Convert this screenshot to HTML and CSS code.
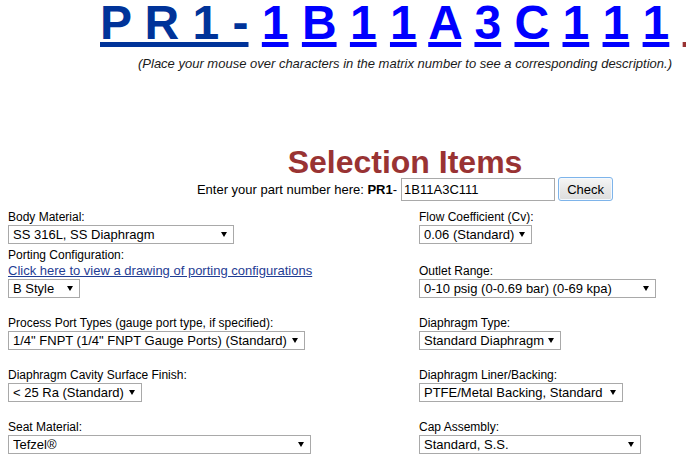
FILE: index.html
```html
<!DOCTYPE html>
<html lang="en">
<head>
    <meta charset="UTF-8">
    <title>PR1 Matrix Number</title>
    <link rel="stylesheet" href="styles.css">
</head>
<body>
<div class="page">

    <h1 class="matrix">
        <a class="base" href="#">P R 1 -</a>
        <a class="ch" href="#">1</a>
        <a class="ch" href="#">B</a>
        <a class="ch" href="#">1</a>
        <a class="ch" href="#">1</a>
        <a class="ch" href="#">A</a>
        <a class="ch" href="#">3</a>
        <a class="ch" href="#">C</a>
        <a class="ch" href="#">1</a>
        <a class="ch" href="#">1</a>
        <a class="ch" href="#">1</a>
        <a class="ch ch-more" href="#">&nbsp;</a>
    </h1>
    <p class="hint">(Place your mouse over characters in the matrix number to see a corresponding description.)</p>

    <h2 class="title">Selection Items</h2>
    <div class="entry">
        <span class="entry-label">Enter your part number here: <b>PR1</b>-</span>
        <input type="text" class="part" value="1B11A3C111">
        <button class="check">Check</button>
    </div>

    <div class="items">
        <!-- left column, first block -->
        <div class="item">
            <label>Body Material:</label>
            <span class="sel w-body"><select><option>SS 316L, SS Diaphragm</option></select></span>
            <label class="next">Porting Configuration:</label>
            <a class="drawing" href="#">Click here to view a drawing of porting configurations</a>
            <span class="sel w-style"><select><option>B Style</option></select></span>
        </div>
        <!-- right column, first block -->
        <div class="item">
            <label>Flow Coefficient (Cv):</label>
            <span class="sel w-flow"><select><option>0.06 (Standard)</option></select></span>
            <label class="spaced">Outlet Range:</label>
            <span class="sel w-outlet"><select><option>0-10 psig (0-0.69 bar) (0-69 kpa)</option></select></span>
        </div>

        <div class="item">
            <label>Process Port Types (gauge port type, if specified):</label>
            <span class="sel w-port"><select><option>1/4" FNPT (1/4" FNPT Gauge Ports) (Standard)</option></select></span>
        </div>
        <div class="item">
            <label>Diaphragm Type:</label>
            <span class="sel w-type"><select><option>Standard Diaphragm</option></select></span>
        </div>

        <div class="item">
            <label>Diaphragm Cavity Surface Finish:</label>
            <span class="sel w-finish"><select><option>&lt; 25 Ra (Standard)</option></select></span>
        </div>
        <div class="item">
            <label>Diaphragm Liner/Backing:</label>
            <span class="sel w-liner"><select><option>PTFE/Metal Backing, Standard</option></select></span>
        </div>

        <div class="item">
            <label>Seat Material:</label>
            <span class="sel w-seat"><select><option>Tefzel&reg;</option></select></span>
        </div>
        <div class="item">
            <label>Cap Assembly:</label>
            <span class="sel w-cap"><select><option>Standard, S.S.</option></select></span>
        </div>
    </div>

</div>
</body>
</html>
```

FILE: styles.css
```css
html {
    overflow: hidden;
}

body {
    margin: 0;
    font-family: "Liberation Sans", Arial, sans-serif;
    font-size: 12px;
    color: #000;
}

.page {
    width: 794px;
    padding: 0 8px;
}

/* matrix number */
.matrix {
    margin: 0;
    padding-left: 92px;
    font-size: 48px;
    line-height: 46px;
    font-weight: bold;
    white-space: nowrap;
}

.matrix a {
    text-decoration: underline;
    text-decoration-thickness: 5px;
    text-underline-offset: 3px;
    text-decoration-skip-ink: none;
}

.matrix .base {
    color: #003399;
}

.matrix .ch {
    color: #0000ff;
}

.matrix .ch-more {
    color: #993333;
}

.hint {
    margin: 10px 0 0;
    font-size: 13px;
    font-style: italic;
    line-height: 15px;
    text-align: center;
    color: #1a1a1a;
}

.title {
    margin: 77px 0 0;
    font-size: 32px;
    line-height: 29px;
    text-align: center;
    color: #993333;
}

/* part number entry */
.entry {
    display: flex;
    justify-content: center;
    align-items: baseline;
    font-size: 13px;
}

.entry-label {
    line-height: 15px;
}

.part {
    box-sizing: border-box;
    width: 154px;
    height: 23px;
    margin: 0 3px 0 4px;
    padding: 0 2px;
    border: 1px solid #a9a9a9;
    font: 13px "Liberation Sans", Arial, sans-serif;
    color: #000;
}

.check {
    box-sizing: border-box;
    width: 55px;
    height: 24px;
    padding: 0;
    border: 1px solid #7eb4ea;
    border-radius: 3px;
    background: linear-gradient(#f6f6f6, #e8e8e8 50%, #dddddd);
    box-shadow: inset 0 0 0 1px #f4f9fe;
    font: 13px "Liberation Sans", Arial, sans-serif;
    color: #000;
}

/* selection items */
.items {
    display: grid;
    grid-template-columns: 411px 1fr;
    row-gap: 18px;
    margin-top: 9px;
}

.item label {
    display: block;
    line-height: 15px;
}

.item .next {
    margin-top: 4px;
}

.item .spaced {
    margin-top: 20px;
}

.drawing {
    display: block;
    margin-bottom: 1px;
    font-size: 13px;
    line-height: 15px;
    color: #1f3d94;
}

.sel {
    display: block;
    position: relative;
    height: 19px;
}

.sel select {
    box-sizing: border-box;
    appearance: none;
    width: 100%;
    height: 19px;
    margin: 0;
    padding: 0 0 0 4px;
    border: 1px solid #a9a9a9;
    border-radius: 0;
    background: #fff;
    font: 13px "Liberation Sans", Arial, sans-serif;
    color: #000;
}

.sel::after {
    content: "";
    position: absolute;
    top: 7px;
    right: 7px;
    border-left: 3px solid transparent;
    border-right: 3px solid transparent;
    border-top: 5px solid #000;
}

.w-body { width: 226px; }
.w-style { width: 72px; }
.w-flow { width: 113px; }
.w-outlet { width: 237px; }
.w-port { width: 297px; }
.w-type { width: 142px; }
.w-finish { width: 134px; }
.w-liner { width: 204px; }
.w-seat { width: 303px; }
.w-cap { width: 222px; }
```
